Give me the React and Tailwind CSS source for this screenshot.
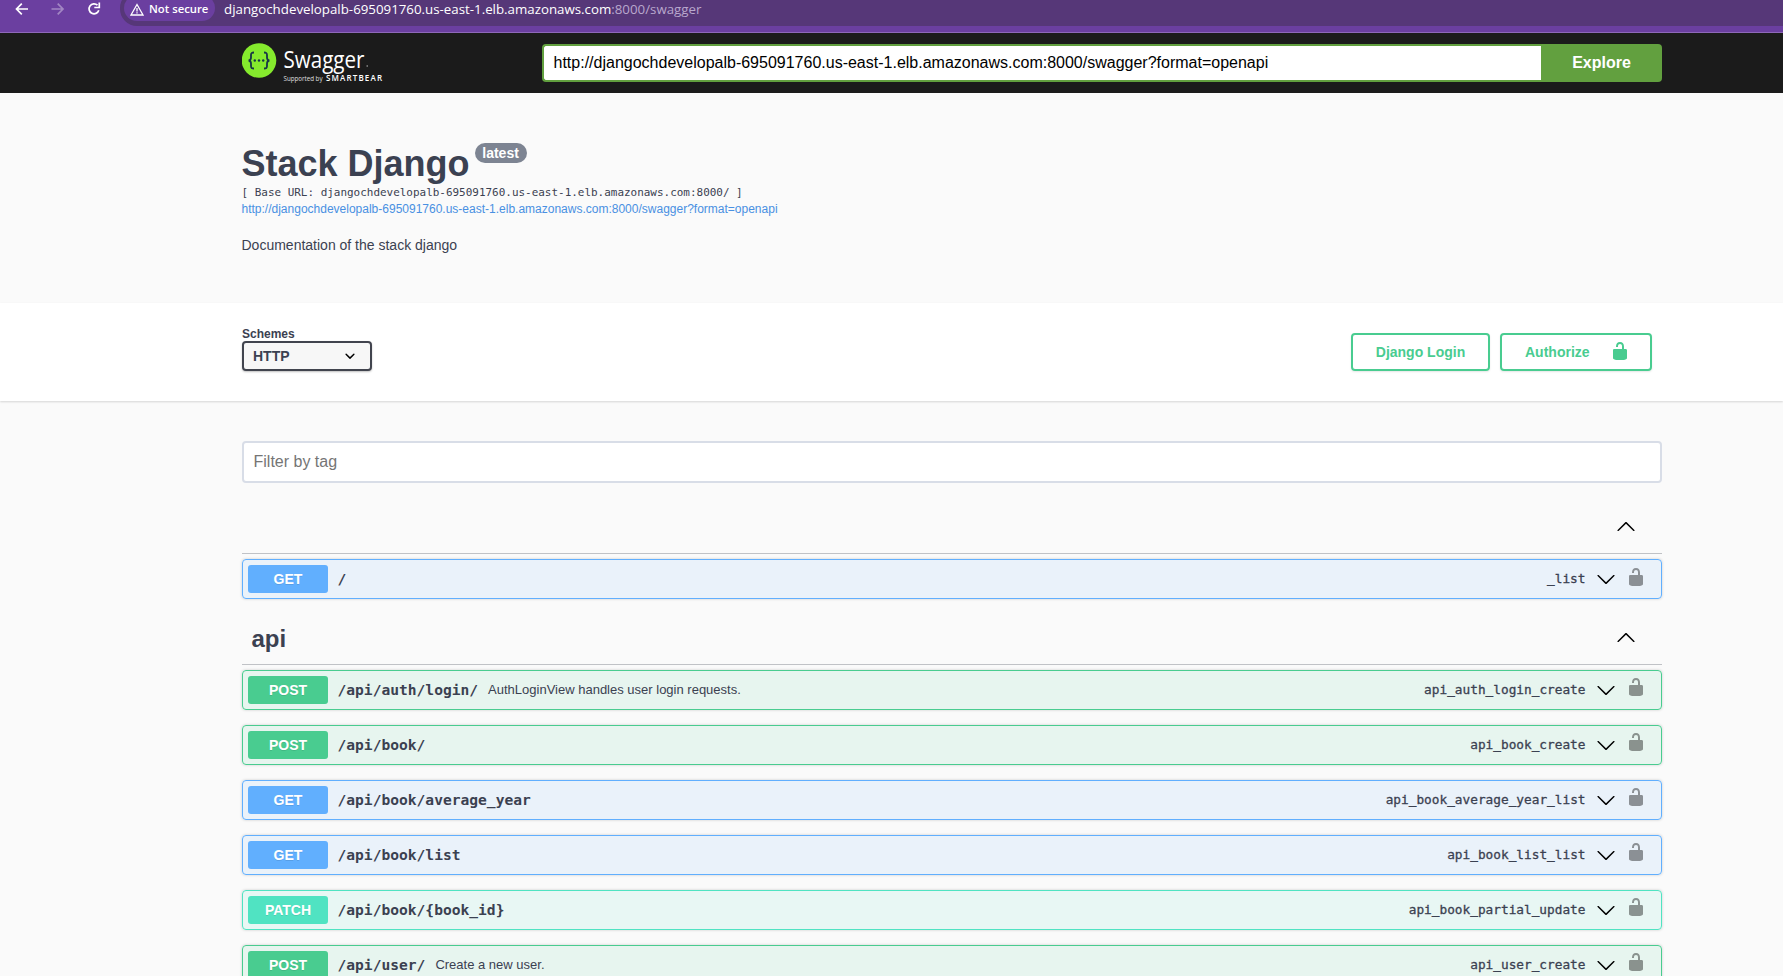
import React from "react";

const HOST = "djangochdevelopalb-695091760.us-east-1.elb.amazonaws.com";

const METHODS = {
  GET: { row: "border-[#61affe] bg-[#61affe]/10", badge: "bg-[#61affe]" },
  POST: { row: "border-[#49cc90] bg-[#49cc90]/10", badge: "bg-[#49cc90]" },
  PATCH: { row: "border-[#50e3c2] bg-[#50e3c2]/10", badge: "bg-[#50e3c2]" },
};

const API = [
  { method: "POST", path: "/api/auth/login/", summary: "AuthLoginView handles user login requests.", id: "api_auth_login_create" },
  { method: "POST", path: "/api/book/", id: "api_book_create" },
  { method: "GET", path: "/api/book/average_year", id: "api_book_average_year_list" },
  { method: "GET", path: "/api/book/list", id: "api_book_list_list" },
  { method: "PATCH", path: "/api/book/{book_id}", id: "api_book_partial_update" },
  { method: "POST", path: "/api/user/", summary: "Create a new user.", id: "api_user_create" },
];

function Unlocked({ className }) {
  return (
    <svg viewBox="0 0 20 20" fill="currentColor" className={"size-5 shrink-0 " + className}>
      <path d="M15.8 8H14V5.6C14 2.703 12.665 1 10 1 7.334 1 6 2.703 6 5.6V6h2v-.801C8 3.754 8.797 3 10 3c1.203 0 2 .754 2 2.199V8H4c-.553 0-1 .646-1 1.199V17c0 .549.428 1.139.951 1.307l1.197.387C5.672 18.861 6.55 19 7.1 19h5.8c.549 0 1.428-.139 1.951-.307l1.196-.387c.524-.167.953-.757.953-1.306V9.199C17 8.646 16.352 8 15.8 8z" />
    </svg>
  );
}

function ArrowDown({ className }) {
  return (
    <svg viewBox="0 0 20 20" className={"size-5 shrink-0 " + className}>
      <path d="M17.418 6.109c.272-.268.709-.268.979 0s.271.701 0 .969l-7.908 7.83c-.27.268-.707.268-.979 0l-7.908-7.83c-.27-.268-.27-.701 0-.969.271-.268.709-.268.979 0L10 13.25l7.418-7.141z" />
    </svg>
  );
}

function ArrowUp({ className }) {
  return (
    <svg viewBox="0 0 20 20" className={"size-5 shrink-0 " + className}>
      <path d="M17.418 14.908c.272.268.709.268.979 0s.271-.701 0-.969l-7.908-7.83c-.27-.268-.707-.268-.979 0l-7.908 7.83c-.27.268-.27.701 0 .969.271.268.709.268.979 0L10 7.767l7.418 7.141z" />
    </svg>
  );
}

function BrowserBar() {
  return (
    <div className="flex h-[33px] items-start overflow-hidden border-b border-[#8e68b9] bg-[#6b3fa0] font-['Open_Sans','Noto_Sans',sans-serif]">
      <svg viewBox="0 0 120 26" className="h-[26px] w-[120px] shrink-0" fill="none" strokeWidth="1.7">
        <path d="M28 9H17M21.800 3.700L16.500 9l5.300 5.300" stroke="#fff" />
        <path d="M51.500 9H62.500M57.700 3.700L63 9l-5.300 5.300" stroke="#a287c3" />
        <path d="M97.500 5.200A5 5 0 1 0 98.800 10.300" stroke="#fff" />
        <path d="M99.300 2.500V7.500H94.300" stroke="#fff" />
      </svg>
      <div className="-mt-[9px] flex h-[35px] flex-1 items-start rounded-l-[17px] bg-[#563778] pt-[4px] pl-[4px]">
        <div className="flex h-[26px] w-[91px] items-center rounded-[13px] bg-[#6b3fa0] pl-[6px]">
          <svg viewBox="0 0 14 13" className="mt-[2px] h-[13px] w-[14px]" fill="none" stroke="#fff" strokeWidth="1.3">
            <path d="M7 1.500L13 12H1z" />
            <path d="M7 5v3.500M7 9.300v1.300" />
          </svg>
          <span className="mt-[2px] ml-[5px] text-[11.300px] leading-4 font-semibold whitespace-nowrap text-white">Not secure</span>
        </div>
        <span className="mt-[5px] ml-[9px] text-[13.300px] leading-[18px] whitespace-nowrap text-white">
          {HOST}
          <span className="text-[#b9a8cd]">:8000/swagger</span>
        </span>
      </div>
    </div>
  );
}

function Logo() {
  return (
    <svg viewBox="0 0 146 42" className="h-[42px] w-[146px] shrink-0">
      <circle cx="17" cy="18.500" r="17.300" fill="#85ea2d" />
      <g fill="none" stroke="#173647" strokeWidth="1.800">
        <path d="M12 10.500c-2.600 0-3 .8-3 2.600v2.300c0 2-.7 2.900-2.400 3.100 1.700.2 2.400 1.100 2.400 3.100v2.300c0 1.800.4 2.600 3 2.600" />
        <path d="M22 10.500c2.600 0 3 .8 3 2.600v2.300c0 2 .7 2.900 2.400 3.100-1.700.2-2.400 1.100-2.400 3.100v2.300c0 1.800-.4 2.600-3 2.600" />
      </g>
      <g fill="#173647">
        <circle cx="12.800" cy="18.500" r="1.200" />
        <circle cx="17" cy="18.500" r="1.200" />
        <circle cx="21.200" cy="18.500" r="1.200" />
      </g>
      <g fill="#fff" className="font-['Open_Sans',sans-serif]">
        <text x="41.500" y="25.500" fontSize="24" textLength="81" lengthAdjust="spacingAndGlyphs">Swagger</text>
        <rect x="124.500" y="23.500" width="1.500" height="1" opacity=".7" />
        <text x="41.500" y="39" fontSize="6.500" textLength="39" lengthAdjust="spacingAndGlyphs" opacity=".85">Supported by</text>
        <text x="84" y="39" fontSize="8" fontWeight="600" textLength="56" lengthAdjust="spacing">SMARTBEAR</text>
      </g>
    </svg>
  );
}

function Operation({ op, lockClass }) {
  const m = METHODS[op.method];
  return (
    <div className={"flex h-10 items-center rounded border pr-[15px] pl-[5px] shadow-[0_0_3px_rgba(0,0,0,0.19)] " + m.row}>
      <span className={"h-7 w-20 shrink-0 rounded-[3px] text-center text-[14px] leading-7 font-bold text-white [text-shadow:0_1px_0_rgba(0,0,0,0.1)] " + m.badge}>
        {op.method}
      </span>
      <span className="ml-[9.500px] font-['DejaVu_Sans_Mono',monospace] text-[14.600px] leading-5 font-bold whitespace-nowrap">{op.path}</span>
      {op.summary && <span className="ml-[10px] text-[13px] leading-5 whitespace-nowrap">{op.summary}</span>}
      <span className="ml-auto font-['DejaVu_Sans_Mono',monospace] text-[12.780px] leading-5 whitespace-nowrap [-webkit-text-stroke:0.3px_#3b4151]">{op.id}</span>
      <ArrowDown className="ml-[10.500px]" />
      <Unlocked className={"ml-[10px] text-black opacity-40 " + lockClass} />
    </div>
  );
}

export default function App() {
  return (
    <div className="h-[976px] w-[1783px] overflow-hidden bg-[#fafafa] font-['Liberation_Sans',Arial,sans-serif] text-[#3b4151]">
      <BrowserBar />

      <header className="flex h-[60px] items-center bg-[#1b1b1b] pl-[242px]">
        <Logo />
        <div className="ml-[154px] flex h-[38px] w-[1120px]">
          <div className="flex flex-1 items-center rounded-l border-2 border-r-0 border-[#62a03f] bg-white pl-[9.500px] text-[16px] text-black">
            http://{HOST}:8000/swagger?format=openapi
          </div>
          <button className="w-[121px] rounded-r bg-[#62a03f] text-[16px] font-bold text-white">Explore</button>
        </div>
      </header>

      <section className="h-[210px] pt-[50px] pl-[241.500px]">
        <div className="flex h-[43px] items-start">
          <h1 className="mt-px text-[36px] leading-[40px] font-bold whitespace-nowrap">Stack Django</h1>
          <span className="ml-[5px] h-5 w-[52px] rounded-full bg-[#7d8492] text-center text-[14px] leading-5 font-bold text-white">latest</span>
        </div>
        <pre className="font-['DejaVu_Sans_Mono',monospace] text-[10.960px] leading-[14px]">[ Base URL: {HOST}:8000/ ]</pre>
        <a className="mt-px block text-[12px] leading-[16px] text-[#4990e2]">http://{HOST}:8000/swagger?format=openapi</a>
        <p className="mt-[19px] text-[14px] leading-[18px]">Documentation of the stack django</p>
      </section>

      <section className="flex h-[98px] items-start justify-between bg-white pt-[24px] pr-[131px] pl-[242px] shadow-[0_1px_2px_rgba(0,0,0,0.15)]">
        <div>
          <div className="h-[14px] text-[12px] leading-[14px] font-bold">Schemes</div>
          <div className="flex h-[30px] w-[130px] items-center justify-between rounded border-2 border-[#41444e] bg-[#f7f7f7] pr-[10px] pl-[9px] text-[14px] font-bold shadow-[0_1px_2px_rgba(0,0,0,0.25)]">
            HTTP
            <svg viewBox="0 0 20 20" className="size-5">
              <path d="M13.418 7.859a.695.695 0 01.978 0 .68.68 0 010 .969l-3.908 3.83a.697.697 0 01-.979 0l-3.908-3.83a.68.68 0 010-.969.695.695 0 01.978 0L10 11l3.418-3.141z" />
            </svg>
          </div>
        </div>
        <div className="mt-[6px] flex gap-[10px] text-[14px] font-bold text-[#49cc90]">
          <button className="h-[38px] w-[139px] rounded border-2 border-[#49cc90] shadow-[0_1px_2px_rgba(0,0,0,0.1)]">Django Login</button>
          <button className="flex h-[38px] w-[152px] items-center justify-between rounded border-2 border-[#49cc90] pr-[20px] pl-[23px] shadow-[0_1px_2px_rgba(0,0,0,0.1)]">
            Authorize
            <Unlocked className="-mt-[2px]" />
          </button>
        </div>
      </section>

      <main className="ml-[242px] w-[1420px] pt-10">
        <input
          placeholder="Filter by tag"
          className="block h-[42px] w-full rounded border-2 border-[#d8dde7] bg-white pr-[10px] pl-[9.500px] text-[16px] placeholder:text-[#757575]"
        />

        <div className="mt-[22px] flex h-[49px] items-start justify-end border-b border-[#3b4151]/30 pt-[11px] pr-[26px]">
          <ArrowUp />
        </div>
        <div className="mt-[5px]">
          <Operation op={{ method: "GET", path: "/", id: "_list" }} lockClass="-mt-[5px]" />
        </div>

        <div className="mt-[17px] flex h-[49px] items-start justify-between border-b border-[#3b4151]/30 pr-[26px] pl-[9.500px]">
          <h2 className="mt-[8px] text-[24px] leading-[30px] font-bold">api</h2>
          <ArrowUp className="mt-[11px]" />
        </div>
        <div className="mt-[5px] flex flex-col gap-[15px]">
          {API.map((op) => (
            <Operation key={op.path} op={op} lockClass="-mt-[7px]" />
          ))}
        </div>
      </main>
    </div>
  );
}
